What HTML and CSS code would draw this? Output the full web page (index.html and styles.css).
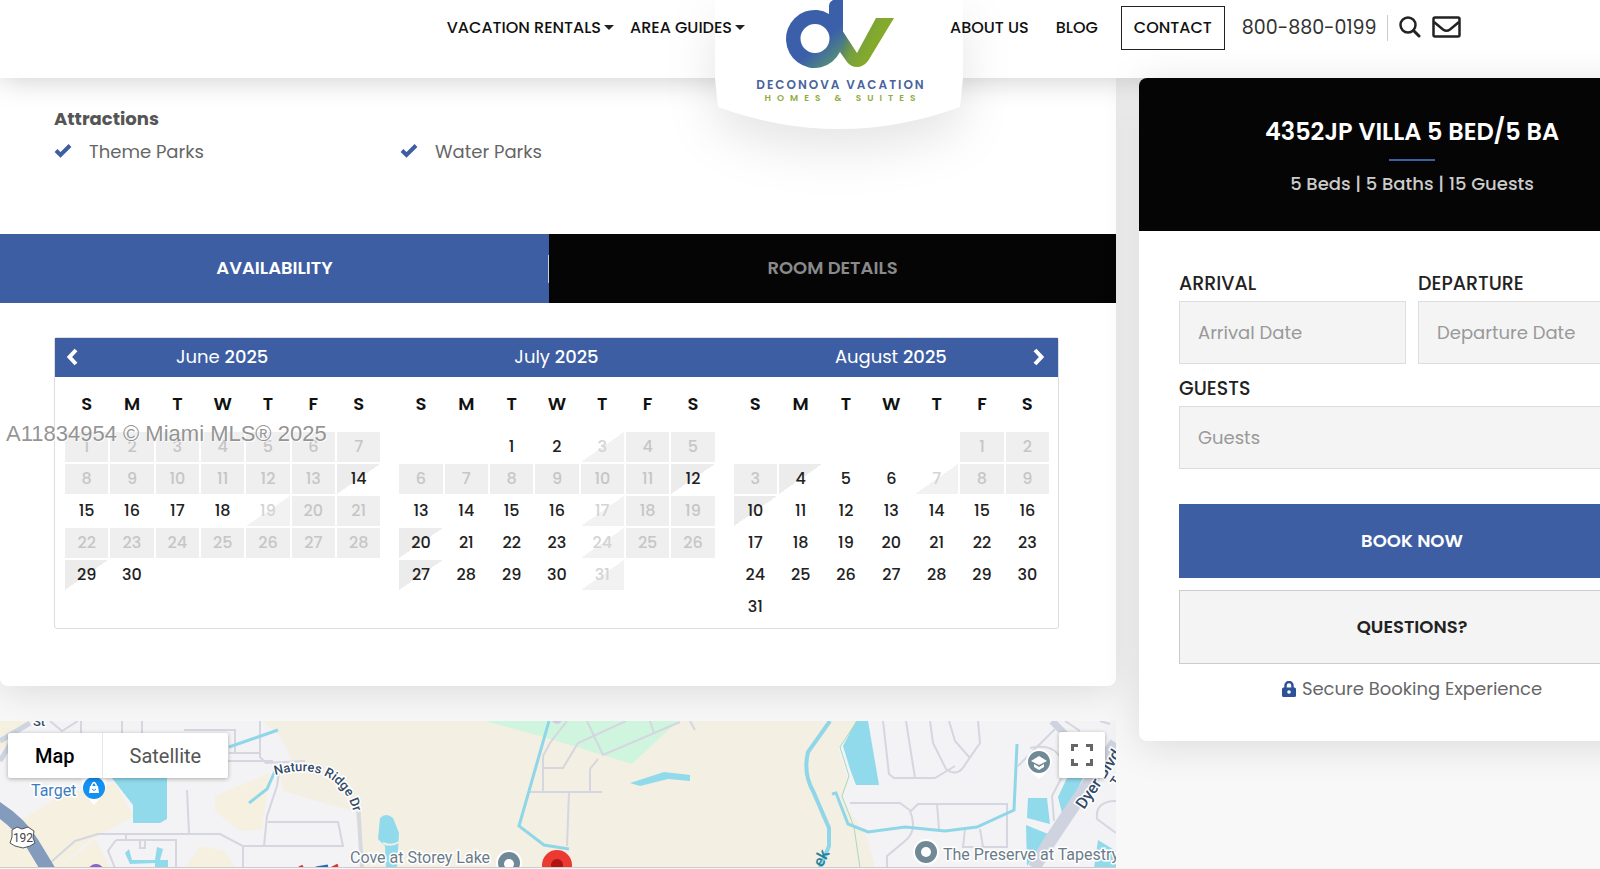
FILE: index.html
```html
<!DOCTYPE html>
<html lang="en">
<head>
<meta charset="utf-8">
<title>4352JP Villa 5 Bed/5 Ba | Deconova Vacation Homes &amp; Suites</title>
<link rel="stylesheet" href="styles.css">
</head>
<body>
<header class="header">
  <nav class="nav nav-left">
    <a href="#">VACATION RENTALS<i class="caret"></i></a>
    <a href="#">AREA GUIDES<i class="caret"></i></a>
  </nav>
  <a class="logo" href="#" aria-label="Deconova Vacation Homes and Suites">
    <svg class="logo-flap" viewBox="0 0 248 130" aria-hidden="true"><path d="M0 0H248V78L245 107Q124 151 3 107L0 78Z" fill="#fff"/></svg>
    <svg class="logo-mark" viewBox="-2 0 110 70" aria-hidden="true">
      <defs>
        <linearGradient id="gd" gradientUnits="userSpaceOnUse" x1="22" y1="16" x2="60" y2="60"><stop offset=".5" stop-color="#3b60a9"/><stop offset="1" stop-color="#5c9a6c"/></linearGradient>
        <linearGradient id="gv" gradientUnits="userSpaceOnUse" x1="56" y1="36" x2="84" y2="50"><stop offset="0" stop-color="#44708c"/><stop offset=".5" stop-color="#76a03f"/><stop offset="1" stop-color="#84aa2c"/></linearGradient>
      </defs>
      <path d="M56 30L71 53L90 18H108L82 61Q77 67 71 67Q65 67 61 62L54 52Z" fill="url(#gv)"/>
      <path fill-rule="evenodd" d="M43 14V6Q43 2 47 0H57V40A28.500 29 0 1 1 43 14ZM29 24A14.500 14.500 0 1 0 29 53A14.500 14.500 0 1 0 29 24Z" fill="url(#gd)"/>
    </svg>
    <span class="logo-name">DECONOVA VACATION</span>
    <span class="logo-sub">HOMES &amp; SUITES</span>
  </a>
  <nav class="nav nav-right">
    <a href="#">ABOUT US</a>
    <a href="#">BLOG</a>
    <a class="contact" href="#">CONTACT</a>
    <a class="phone" href="tel:8008800199">800-880-0199</a>
    <div class="tools">
      <button type="button" aria-label="Search"><svg width="22" height="22" viewBox="0 0 22 22"><circle cx="9" cy="9" r="7.500" fill="none" stroke="#222" stroke-width="2.500"/><path d="M14.500 14.500L20 20" stroke="#222" stroke-width="3" stroke-linecap="round"/></svg></button>
      <button type="button" aria-label="Email"><svg width="29" height="22" viewBox="0 0 29 22"><rect x="1.500" y="1.500" width="26" height="19" rx="1.500" fill="none" stroke="#222" stroke-width="2.500"/><path d="M2 6L11 13.500Q14.500 16 18 13.500L27 6" fill="none" stroke="#222" stroke-width="2.500"/></svg></button>
    </div>
  </nav>
</header>

<div class="layout">
  <main class="main">
    <article class="card">
      <section class="attractions">
        <h3>Attractions</h3>
        <ul>
          <li><svg width="18" height="15" viewBox="0 0 18 15"><path d="M2 7.500L6.500 12L16 2.500" fill="none" stroke="#3d5ea3" stroke-width="4"/></svg>Theme Parks</li>
          <li><svg width="18" height="15" viewBox="0 0 18 15"><path d="M2 7.500L6.500 12L16 2.500" fill="none" stroke="#3d5ea3" stroke-width="4"/></svg>Water Parks</li>
        </ul>
      </section>
      <div class="tabs" role="tablist">
        <button type="button" role="tab" class="tab active" aria-selected="true">AVAILABILITY</button>
        <button type="button" role="tab" class="tab" aria-selected="false">ROOM DETAILS</button>
      </div>
      <section class="calendar">
        <div class="month">
          <div class="month-head">
            <button class="prev" type="button" aria-label="Previous"><svg width="12" height="18" viewBox="0 0 12 18"><path d="M10 2L3.500 9L10 16" fill="none" stroke="#fff" stroke-width="4"/></svg></button>
            June <b>2025</b></div>
          <table>
            <thead><tr><th>S</th><th>M</th><th>T</th><th>W</th><th>T</th><th>F</th><th>S</th></tr></thead>
            <tbody>
            <tr><td class="off">1</td><td class="off">2</td><td class="off">3</td><td class="off">4</td><td class="off">5</td><td class="off">6</td><td class="off">7</td></tr>
            <tr><td class="off">8</td><td class="off">9</td><td class="off">10</td><td class="off">11</td><td class="off">12</td><td class="off">13</td><td class="out">14</td></tr>
            <tr><td>15</td><td>16</td><td>17</td><td>18</td><td class="in">19</td><td class="off">20</td><td class="off">21</td></tr>
            <tr><td class="off">22</td><td class="off">23</td><td class="off">24</td><td class="off">25</td><td class="off">26</td><td class="off">27</td><td class="off">28</td></tr>
            <tr><td class="out">29</td><td>30</td><td></td><td></td><td></td><td></td><td></td></tr>
            </tbody>
          </table>
        </div>
        <div class="month">
          <div class="month-head">July <b>2025</b></div>
          <table>
            <thead><tr><th>S</th><th>M</th><th>T</th><th>W</th><th>T</th><th>F</th><th>S</th></tr></thead>
            <tbody>
            <tr><td></td><td></td><td>1</td><td>2</td><td class="in">3</td><td class="off">4</td><td class="off">5</td></tr>
            <tr><td class="off">6</td><td class="off">7</td><td class="off">8</td><td class="off">9</td><td class="off">10</td><td class="off">11</td><td class="out">12</td></tr>
            <tr><td>13</td><td>14</td><td>15</td><td>16</td><td class="in">17</td><td class="off">18</td><td class="off">19</td></tr>
            <tr><td class="out">20</td><td>21</td><td>22</td><td>23</td><td class="in">24</td><td class="off">25</td><td class="off">26</td></tr>
            <tr><td class="out">27</td><td>28</td><td>29</td><td>30</td><td class="in">31</td><td></td><td></td></tr>
            </tbody>
          </table>
        </div>
        <div class="month">
          <div class="month-head">August <b>2025</b>
            <button class="next" type="button" aria-label="Next"><svg width="12" height="18" viewBox="0 0 12 18"><path d="M2 2L8.500 9L2 16" fill="none" stroke="#fff" stroke-width="4"/></svg></button></div>
          <table>
            <thead><tr><th>S</th><th>M</th><th>T</th><th>W</th><th>T</th><th>F</th><th>S</th></tr></thead>
            <tbody>
            <tr><td></td><td></td><td></td><td></td><td></td><td class="off">1</td><td class="off">2</td></tr>
            <tr><td class="off">3</td><td class="out">4</td><td>5</td><td>6</td><td class="in">7</td><td class="off">8</td><td class="off">9</td></tr>
            <tr><td class="out">10</td><td>11</td><td>12</td><td>13</td><td>14</td><td>15</td><td>16</td></tr>
            <tr><td>17</td><td>18</td><td>19</td><td>20</td><td>21</td><td>22</td><td>23</td></tr>
            <tr><td>24</td><td>25</td><td>26</td><td>27</td><td>28</td><td>29</td><td>30</td></tr>
            <tr><td>31</td><td></td><td></td><td></td><td></td><td></td><td></td></tr>
            </tbody>
          </table>
        </div>
      </section>
    </article>

    <section class="map">
      <svg class="map-canvas" viewBox="0 0 1116 147" preserveAspectRatio="xMinYMin slice">
        <rect width="1116" height="147" fill="#f3f2f4"/>
        <g fill="#f5f0df">
          <path d="M0 0H30L0 30Z"/><path d="M20 100L60 75L115 62L133 95L85 122L60 147H0V100Z"/>
          <path d="M215 75L270 52L262 108L240 110L215 90Z"/><path d="M200 125L225 130L235 147H185Z"/><path d="M60 147L95 118L110 147Z"/>
        </g>
        <path d="M262 0H858L838 28L848 60L842 78L868 118L875 147H362L355 90L330 84L283 70L280 52L295 45L280 15Z" fill="#f3efe3"/>
        <path d="M485 0H678L632 43L540 15Z" fill="#d0f5de"/>
        <g fill="#90daec">
          <path d="M112 57H167V98L160 102H133V84Z"/>
          <path d="M380 97Q386 91 393 97L399 112L397 147H386L385 125L378 118Z"/>
          <path d="M125 132L129 128L132 139H155L157 126L163 128L160 139H168V147H155V142L130 143Z"/>
          <path d="M630 62L664 51L690 54V60L668 58L640 65Z"/>
          <path d="M856 0H868L879 64H856L850 48L843 25Z"/>
          <path d="M1028 77H1047L1050 103L1027 97Z"/><path d="M1026 104L1048 113L1027 145Z"/>
          <path d="M1067 57H1083L1072 80L1063 96L1058 76Z"/><path d="M1098 119L1116 130V147H1094Z"/>
        </g>
        <path d="M383 122Q391 126 399 121" fill="none" stroke="#f3efe3" stroke-width="2"/>
        <g fill="none" stroke="#d5d6e0" stroke-width="2">
          <path d="M81 0V12M122 0V12M142 0V12M50 0L62 10L78 0M184 9H235V32M229 32H259M228 40H273M260 0V36L266 42L305 40M280 45L277 65L267 95L264 125M268 101H338L343 125H244M243 147V125L220 113H98L75 120L50 142M187 69L189 112M126 113V119M116 119H176V147M116 119L108 130L115 147M140 119V127H145V119"/>
          <path d="M543 47V35L550 22L567 0M543 47H563L578 22L626 0M543 47V71M530 71H602M569 71L567 125M587 0L603 34L680 1M590 71V48L598 38M650 0L654 12M690 0L695 9"/>
          <path d="M883 0L889 53L894 57H935L955 45M906 0L915 57M930 0L933 22L946 48Q955 55 962 48L980 22L978 0M949 0L955 20L970 37M850 82H900L911 90L918 83H1007V127M937 83L939 108M910 90Q918 110 905 120L887 135V147M965 108L963 126H1008M980 108L983 126M1018 45L1055 8M1030 27Q1060 20 1065 50L1052 75L1054 100M1116 80Q1095 80 1097 98L1116 112M1110 3L1100 0M1065 0L1080 10"/>
        </g>
        <path d="M358 82L362 147" stroke="#d8d9df" stroke-width="4"/>
        <path d="M857 0L840 26L849 55L842 75L854 106L860 147" fill="none" stroke="#a8d9b8"/>
        <path d="M1116 22L1050 120L1034 147" fill="none" stroke="#cfd3df" stroke-width="13"/><path d="M1052 0L1066 14" stroke="#cfd3df" stroke-width="7"/>
        <path d="M0 20L30 2M0 40L12 20" stroke="#ccd5e1" stroke-width="5"/>
        <g fill="none" stroke="#8fd7e8" stroke-width="3">
          <path d="M229 26L278 9M275 50L267 68L249 82"/>
          <path d="M549 0L519 105L544 124L569 128"/>
          <path d="M830 0L808 31Q803 52 813 70L829 107V125L820 147" stroke-width="4"/>
          <path d="M832 73L836 72L848 103L868 111L905 106L945 110L977 106L1014 89L1017 23"/>
        </g>
        <path d="M-5 86Q20 102 32 122L55 160" fill="none" stroke="#839bbc" stroke-width="14"/>
        <path d="M12 109L17 106L22 108L28 106L34 110L33 117L35 122L30 125L23 127L15 125L10 122L12 116Z" fill="#fff" stroke="#555"/>
        <text x="23" y="121" class="map-small" text-anchor="middle">192</text>
        <path d="M82 57H106Q108 68 100 77L94 84L88 77Q80 68 82 57Z" fill="#fff"/><circle cx="94" cy="67" r="11" fill="#1391f2"/>
        <path d="M90 65H98L99 72H89Z" fill="#fff"/><path d="M91.500 65Q94 58 96.500 65" fill="none" stroke="#fff" stroke-width="1.500"/><path d="M92 68Q94 71 96 68" fill="none" stroke="#1391f2"/>
        <text x="31" y="75" class="map-label target">Target</text>
        <text x="33" y="5" class="map-road">St</text>
        <path id="ridge" d="M275 54C306 46 326 51 339 65Q352 78 358 108" fill="none"/><text class="map-road"><textPath href="#ridge">Natures Ridge Dr</textPath></text>
        <text x="350" y="142" class="map-label">Cove at Storey Lake</text>
        <circle cx="509" cy="142" r="13" fill="#fff"/><circle cx="509" cy="142" r="11" fill="#718997"/><circle cx="509" cy="143" r="5" fill="#fff"/>
        <circle cx="557" cy="144" r="15" fill="#ea3a32"/><circle cx="557" cy="144" r="6" fill="#b11410"/>
        <circle cx="96" cy="151" r="8" fill="#8b62c9"/>
        <path d="M299 147L303 145M332 147L338 144" stroke="#d33" stroke-width="3"/><path d="M316 147L328 145" stroke="#236ac0" stroke-width="3"/>
        <circle cx="557" cy="-2" r="5" fill="#d2cbdf"/>
        <path d="M1026 41A13 13 0 1 1 1052 41Q1051 49 1039 58Q1027 49 1026 41Z" fill="#fff"/><circle cx="1039" cy="41" r="11" fill="#718997"/>
        <path d="M1031 40L1039 35L1047 40L1039 44ZM1034 43V46L1039 49L1044 46V43L1039 46Z" fill="#fff"/>
        <circle cx="926" cy="131" r="13" fill="#fff"/><circle cx="926" cy="131" r="11" fill="#718997"/><circle cx="926" cy="131" r="5" fill="#fff"/>
        <text x="943" y="139" class="map-label">The Preserve at Tapestry</text>
        <text class="map-road dyer" transform="translate(1084 89) rotate(-56)">Dyer Blvd</text>
        <text class="map-road" transform="translate(1117 66) rotate(-56)">T</text>
        <text class="map-road creek" transform="translate(822 147) rotate(-62)">ek</text>
      </svg>
      <div class="map-type">
        <button type="button" class="selected">Map</button>
        <button type="button">Satellite</button>
      </div>
      <button type="button" class="fullscreen" aria-label="Toggle fullscreen"><svg width="22" height="22" viewBox="0 0 22 22"><path d="M1.500 7V1.500H7M15 1.500H20.500V7M20.500 15V20.500H15M7 20.500H1.500V15" fill="none" stroke="#666" stroke-width="3"/></svg></button>
    </section>
  </main>

  <aside class="booking">
    <div class="booking-head">
      <h2>4352JP VILLA 5 BED/5 BA</h2>
      <hr>
      <p>5 Beds | 5 Baths | 15 Guests</p>
    </div>
    <form class="form">
      <div class="field"><label for="arrival">ARRIVAL</label><input id="arrival" type="text" placeholder="Arrival Date"></div>
      <div class="field"><label for="departure">DEPARTURE</label><input id="departure" type="text" placeholder="Departure Date"></div>
      <div class="field wide"><label for="guests">GUESTS</label><input id="guests" type="text" placeholder="Guests"></div>
      <button class="book wide" type="button">BOOK NOW</button>
      <button class="questions wide" type="button">QUESTIONS?</button>
      <p class="secure wide"><svg width="14" height="16" viewBox="0 0 14 16"><path d="M3.500 8V4.500A3.500 3.500 0 0 1 10.500 4.500V8" fill="none" stroke="#2f5199" stroke-width="2.500"/><rect y="6.500" width="14" height="9.500" rx="1.500" fill="#2f5199"/><circle cx="7" cy="11" r="1.800" fill="#fff"/></svg>Secure Booking Experience</p>
    </form>
  </aside>
</div>
<div class="watermark">A11834954 © Miami MLS® 2025</div>
</body>
</html>
```
FILE: styles.css
```css
* { box-sizing: border-box; }
body {
  margin: 0;
  min-height: 100vh;
  position: relative;
  overflow: hidden;
  background: #f8f8f8;
  color: #666;
  font: 18px/28px Poppins, Inter, "Open Sans", sans-serif;
}
h2, h3, p, ul { margin: 0; padding: 0; }
button { font: inherit; border: 0; padding: 0; background: none; cursor: pointer; }
a { color: inherit; text-decoration: none; }

.header {
  position: relative;
  z-index: 2;
  height: 78px;
  display: grid;
  grid-template-columns: minmax(0, 715fr) 248px minmax(0, 637fr);
  background: #fff;
  box-shadow: 0 0 30px rgba(0, 0, 0, .22);
}
.nav { position: relative; z-index: 1; display: flex; height: 56px; align-items: center; color: #111; font-size: 16px; font-weight: 500; white-space: nowrap; }
.nav-left { justify-content: flex-end; gap: 16px; margin-right: -30px; }
.caret { display: inline-block; margin-left: 3px; border: 5px solid transparent; border-top-color: #222; border-bottom: 0; vertical-align: 3px; }
.nav-right { margin-left: -13px; }
.nav-right a { margin-right: 27px; }
.nav-right .contact { margin: 0 17px 0 -4px; padding: 7px 12px; border: 1px solid #222; }
.nav-right .phone { font-size: 19px; font-weight: 400; color: #333; margin-right: 10px; }
.tools { display: flex; gap: 11px; border-left: 1px solid #ccc; padding-left: 11px; height: 26px; align-items: center; }
.tools svg { display: block; }
.tools button { padding-bottom: 3px; }
.logo { position: relative; height: 130px; display: flex; flex-direction: column; align-items: center; }
.logo-flap { position: absolute; left: 0; top: 0; width: 248px; height: 130px; overflow: visible; filter: drop-shadow(0 20px 24px rgba(0, 0, 0, .1)); }
.logo-mark { position: relative; width: 110px; height: 70px; }
.logo-name, .logo-sub { position: relative; white-space: nowrap; font-weight: 600; }
.logo-name { margin-top: 8px; padding-left: 4px; color: #48639d; font-size: 12px; line-height: 14px; letter-spacing: 2px; }
.logo-sub { padding-left: 8px; color: #92ac3b; font-size: 9px; line-height: 12px; letter-spacing: 6px; }

.layout { width: calc(100% + 85px); display: grid; grid-template-columns: minmax(0, 1116fr) minmax(0, 546fr); gap: 23px; align-items: start; }
.card { background: #fff; border-radius: 0 0 8px 8px; box-shadow: 0 5px 40px rgba(0, 0, 0, .12); padding-bottom: 57px; }
.attractions { padding: 27px 54px 68px; }
.attractions h3 { font-size: 18px; line-height: 28px; color: #555; }
.attractions ul { list-style: none; display: grid; grid-template-columns: 346px 1fr; padding-top: 5px; }
.attractions li { display: flex; align-items: center; gap: 17px; font-size: 18px; line-height: 28px; }
.attractions svg { margin-bottom: 3px; }
.tabs { display: flex; }
.tab { flex: 567; height: 69px; padding-bottom: 2px; background: #050505; color: #8a8a8a; font-weight: 600; }
.tab.active { flex: 549; color: #fff; background: linear-gradient(#c5cfe3, #c5cfe3) right center / 1px 28px no-repeat #3d5ea3; }

.calendar { margin: 34px 57px 0 54px; display: grid; grid-template-columns: repeat(3, 1fr); border: 1px solid #ddd; border-radius: 3px; min-height: 292px; }
.month-head { position: relative; height: 39px; line-height: 38px; text-align: center; color: #fff; background: #3d5ea3; }
.month-head b { font-weight: 500; }
.prev, .next { position: absolute; top: 10px; height: 18px; line-height: 0; }
.prev { left: 11px; }
.next { right: 13px; }
.month table { width: calc(100% - 15px); margin: 6px 7px 0 8px; table-layout: fixed; border-collapse: separate; border-spacing: 2px; text-align: center; font-size: 16px; line-height: 20px; color: #222; font-weight: 500; }
.month th { height: 45px; padding: 0 0 8px; color: #111; font-size: 18px; font-weight: 600; }
.month td { height: 30px; padding: 0; }
.month td.off { background: #efefef; color: #c6c6c6; }
.month td.out { background: linear-gradient(to bottom right, #ececec 50%, transparent 50%); }
.month td.in { background: linear-gradient(to bottom right, transparent 50%, #f2f2f2 50%); color: #d4d4d4; }

.map { position: relative; height: 147px; margin-top: 35px; overflow: hidden; border-bottom: 1px solid #ccc; font-family: Roboto, sans-serif; }
.map-canvas { display: block; width: 100%; }
.map-label { font-size: 16px; fill: #6b7b88; stroke: #fff; stroke-width: 3px; paint-order: stroke; }
.map-label.target { fill: #3d7cc0; }
.map-small { font-size: 12px; fill: #444; }
.map-road { font-size: 13px; font-weight: 500; fill: #334a68; stroke: #fff; stroke-width: 3px; paint-order: stroke; }
.map-road.dyer { font-size: 16px; }
.map-road.creek { font-size: 16px; fill: #26809c; stroke: none; }
.map-type { position: absolute; left: 8px; top: 12px; display: flex; height: 45px; background: #fff; border-radius: 2px; box-shadow: 0 1px 4px rgba(0, 0, 0, .3); font-size: 20px; }
.map-type button { padding: 0 27px; color: #555; }
.map-type .selected { color: #000; font-weight: 500; border-right: 1px solid #e6e6e6; }
.fullscreen { position: absolute; right: 11px; top: 11px; width: 46px; height: 46px; background: #fff; border-radius: 2px; box-shadow: 0 1px 4px rgba(0, 0, 0, .3); display: grid; place-items: center; }

.booking { position: relative; z-index: 3; background: #fff; border-radius: 8px; box-shadow: 0 5px 40px rgba(0, 0, 0, .12); }
.booking-head { height: 153px; padding-top: 38px; text-align: center; background: #050505; border-radius: 8px 8px 0 0; color: #ccc; }
.booking-head h2 { font-size: 24px; line-height: 32px; font-weight: 600; color: #fff; }
.booking-head hr { width: 46px; height: 2px; margin: 11px auto 9px; border: 0; background: #3d5ea3; }
.booking-head p { font-weight: 500; }
.form { display: grid; grid-template-columns: 1fr 1fr; gap: 12px; padding: 39px 40px 39px; }
.wide { grid-column: 1 / -1; }
.field { display: flex; flex-direction: column; }
.field label { color: #222; font-weight: 500; line-height: 28px; margin-bottom: 3px; font-size: 19px; }
.field.wide { margin-top: -1px; }
.field input { width: 100%; height: 63px; padding: 0 18px; border: 1px solid #ddd; border-radius: 0; background: #f4f4f4; font: inherit; color: #444; }
.field input::placeholder { color: #999; opacity: 1; }
.book, .questions { height: 74px; font-weight: 600; }
.book { margin-top: 23px; background: #3d5ea3; color: #fff; }
.questions { background: #f4f4f4; border: 1px solid #ccc; color: #222; }
.secure { display: flex; justify-content: center; align-items: center; gap: 6px; line-height: 26px; }
.watermark { position: absolute; z-index: 4; left: 6px; top: 421px; font: 22px/26px "Liberation Sans", Arial, sans-serif; color: rgba(120, 120, 120, .8); text-shadow: 1px 1px 0 rgba(255, 255, 255, .8); pointer-events: none; white-space: nowrap; }
```
